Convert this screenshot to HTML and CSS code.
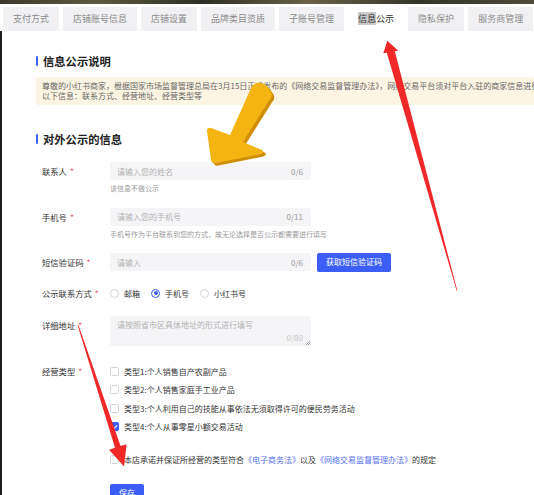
FILE: index.html
```html
<!DOCTYPE html>
<html lang="zh-CN">
<head>
<meta charset="utf-8">
<title>信息公示</title>
<link rel="stylesheet" href="styles.css">
</head>
<body>
<div class="photo-strip"></div>
<nav class="tabs">
  <span class="tab">支付方式</span>
  <span class="tab">店铺账号信息</span>
  <span class="tab">店铺设置</span>
  <span class="tab">品牌类目资质</span>
  <span class="tab">子账号管理</span>
  <span class="tab active"><span class="hl">信息</span>公示</span>
  <span class="tab">隐私保护</span>
  <span class="tab">服务商管理</span>
</nav>
<main class="page">
  <h2 class="section-title first">信息公示说明</h2>
  <div class="notice">
    <p>尊敬的小红书商家，根据国家市场监督管理总局在3月15日正式发布的《网络交易监督管理办法》，网络交易平台须对平台入驻的商家信息进行核验和公示</p>
    <p>以下信息：联系方式、经营地址、经营类型等</p>
  </div>
  <h2 class="section-title second">对外公示的信息</h2>
  <div class="form">
    <div class="field">
      <div class="label">联系人<i>*</i></div>
      <div class="control">
        <div class="input"><span class="ph">请输入您的姓名</span><span class="count">0/6</span></div>
        <div class="help">该信息不做公示</div>
      </div>
    </div>
    <div class="field gap-std">
      <div class="label">手机号<i>*</i></div>
      <div class="control">
        <div class="input"><span class="ph">请输入您的手机号</span><span class="count">0/11</span></div>
        <div class="help">手机号作为平台联系到您的方式，故无论选择是否公示都需要进行填写</div>
      </div>
    </div>
    <div class="field gap-std">
      <div class="label">短信验证码<i>*</i></div>
      <div class="control row">
        <div class="input"><span class="ph">请输入</span><span class="count">0/6</span></div>
        <button class="btn sms">获取短信验证码</button>
      </div>
    </div>
    <div class="field gap-radio">
      <div class="label">公示联系方式<i>*</i></div>
      <div class="control radio-group">
        <span class="radio"><span class="dot"></span>邮箱</span>
        <span class="radio on"><span class="dot"></span>手机号</span>
        <span class="radio"><span class="dot"></span>小红书号</span>
      </div>
    </div>
    <div class="field gap-area">
      <div class="label">详细地址<i>*</i></div>
      <div class="control">
        <div class="textarea"><span class="ph">请按照省市区具体地址的形式进行填写</span><span class="count light">0/80</span></div>
      </div>
    </div>
    <div class="field gap-checks">
      <div class="label tall">经营类型<i>*</i></div>
      <div class="control checks">
        <span class="check"><span class="box"></span>类型1:个人销售自产农副产品</span>
        <span class="check"><span class="box"></span>类型2:个人销售家庭手工业产品</span>
        <span class="check"><span class="box"></span>类型3:个人利用自己的技能从事依法无须取得许可的便民劳务活动</span>
        <span class="check on"><span class="box"></span>类型4:个人从事零星小额交易活动</span>
      </div>
    </div>
    <div class="agreement">
      <span class="check"><span class="box"></span>本店承诺并保证所经营的类型符合 <a class="link">《电子商务法》</a>以及<a class="link">《网络交易监督管理办法》</a>的规定</span>
    </div>
    <div class="actions">
      <button class="btn save">保存</button>
    </div>
  </div>
</main>
<svg class="annotations" width="534" height="495" viewBox="0 0 534 495" aria-hidden="true">
  <path class="yellow-side" d="M252 86 Q259 79 267 86 L271 92 Q273 96 270 99 L243 142 L262 150 Q265 152 261 154 L216 163 Q212 164 211 160 L207 131 Q207 127 211 128 L230 135 Z" transform="translate(2.5 2.5)"/>
  <path class="yellow" d="M252 86 Q259 79 267 86 L271 92 Q273 96 270 99 L243 142 L262 150 Q265 152 261 154 L216 163 Q212 164 211 160 L207 131 Q207 127 211 128 L230 135 Z"/>
  <polygon class="red" points="387.3,40.7 398.3,50.7 394.8,51.3 457.4,291 456.8,291 386.8,52.7 383.3,53.3"/>
  <polygon class="red" points="124.1,466.5 126.6,444.2 120.6,446.1 78.4,325 77.6,325.2 115.0,447.8 109.0,449.8"/>
</svg>
</body>
</html>
```
FILE: styles.css
```css
* {
  box-sizing: border-box;
  margin: 0;
  padding: 0;
}

html,
body {
  width: 534px;
  height: 495px;
  overflow: hidden;
}

body {
  position: relative;
  background: #fff;
  color: #333;
  font-family: "Noto Sans CJK SC", "Noto Sans", sans-serif;
}

.photo-strip {
  height: 4px;
  background: linear-gradient(90deg, #3b3a2c, #5b5a40 18%, #2e2f25 38%, #6a6248 58%, #34352a 78%, #4c4a38);
}

.tabs {
  display: flex;
  gap: 4px;
  height: 24px;
  margin-top: 3px;
  padding-left: 3px;
  white-space: nowrap;
}

.tab {
  flex: none;
  padding: 0 10px;
  background: #f1f1f3;
  color: #8c8c8c;
  font-size: 9px;
  line-height: 24px;
}

.tab.active {
  background: #fff;
  color: #333;
}

.tab .hl {
  background: #c9c9c9;
}

.page {
  height: 464px;
  border-left: 2px solid #1c1c1c;
  padding-left: 34px;
}

.section-title {
  display: flex;
  align-items: center;
  color: #222;
  font-size: 11.3px;
  font-weight: 700;
  line-height: 14px;
}

.section-title::before {
  content: "";
  width: 2px;
  height: 10px;
  margin-right: 5px;
  border-radius: 1px;
  background: #3c5ef7;
}

.section-title.first {
  padding-top: 23px;
}

.section-title.second {
  margin-top: 26.5px;
}

.notice {
  margin-top: 9px;
  padding: 4px 6px;
  overflow: hidden;
  border-radius: 2px;
  background: #fdf5e4;
  color: #666;
  font-size: 8px;
  line-height: 10px;
  white-space: nowrap;
}

.form {
  display: flex;
  flex-direction: column;
  margin-top: 16.5px;
  padding-left: 6px;
}

.field {
  display: flex;
}

.gap-std {
  margin-top: 14.5px;
}

.gap-radio {
  margin-top: 12.5px;
}

.gap-area {
  margin-top: 14px;
}

.gap-checks {
  margin-top: 15.7px;
}

.label {
  flex: none;
  width: 68px;
  color: #333;
  font-size: 8.3px;
  line-height: 18px;
}

.label.tall {
  line-height: 18.67px;
}

.label i {
  margin-left: 3px;
  color: #f2557a;
  font-style: normal;
}

.control.row {
  display: flex;
  align-items: center;
}

.input {
  display: flex;
  align-items: center;
  justify-content: space-between;
  width: 201px;
  height: 18px;
  padding: 0 8px 0 7px;
  border-radius: 2px;
  background: #f5f5f7;
  font-size: 8px;
}

.ph {
  color: #b3b3b3;
}

.count {
  color: #9a9a9a;
}

.count.light {
  align-self: flex-end;
  color: #c6c6c6;
}

.help {
  margin-top: 3px;
  color: #9a9a9a;
  font-size: 7px;
  line-height: 10px;
}

.btn {
  display: block;
  border: none;
  border-radius: 2px;
  background: #3c5ef7;
  color: #fff;
  font-family: inherit;
  font-size: 8px;
  line-height: 10px;
}

.btn.sms {
  width: 74px;
  height: 18.5px;
  margin-left: 6px;
}

.radio-group {
  display: flex;
  align-items: center;
  height: 18px;
}

.radio {
  display: flex;
  align-items: center;
  margin-right: 11px;
  color: #333;
  font-size: 8px;
}

.dot {
  display: flex;
  align-items: center;
  justify-content: center;
  width: 9px;
  height: 9px;
  margin-right: 5px;
  border: 1px solid #d4d4d8;
  border-radius: 50%;
  background: #fff;
}

.radio.on .dot {
  border-color: #3c5ef7;
}

.radio.on .dot::after {
  content: "";
  width: 4px;
  height: 4px;
  border-radius: 50%;
  background: #3c5ef7;
}

.textarea {
  position: relative;
  display: flex;
  flex-direction: column;
  justify-content: space-between;
  width: 201px;
  height: 30px;
  padding: 4px 8px 3px 7px;
  border-radius: 2px;
  background: #f5f5f7;
  font-size: 8px;
  line-height: 10px;
}

.textarea::after {
  content: "";
  position: absolute;
  right: 1px;
  bottom: 1px;
  width: 4px;
  height: 4px;
  background: linear-gradient(135deg, transparent 45%, #999 45%, #999 55%, transparent 55%, transparent 75%, #999 75%, #999 85%, transparent 85%);
}

.checks {
  display: flex;
  flex-direction: column;
}

.check {
  display: flex;
  align-items: center;
  height: 18.67px;
  color: #333;
  font-size: 8px;
  white-space: nowrap;
}

.box {
  position: relative;
  flex: none;
  width: 9px;
  height: 9px;
  margin-right: 5px;
  border: 1px solid #d4d4d8;
  border-radius: 1.5px;
  background: #fff;
}

.check.on .box {
  border-color: #3c5ef7;
  background: #3c5ef7;
}

.check.on .box::after {
  content: "";
  position: absolute;
  left: 2.3px;
  top: 0.4px;
  width: 2.4px;
  height: 4.6px;
  border-right: 1px solid #fff;
  border-bottom: 1px solid #fff;
  transform: rotate(45deg);
}

.agreement {
  display: flex;
  margin-top: 14.3px;
  margin-left: 68px;
}

.link {
  color: #5473f2;
}

.actions {
  display: flex;
  margin-top: 14.7px;
  margin-left: 68px;
}

.btn.save {
  width: 34px;
  height: 18px;
}

.annotations {
  position: absolute;
  top: 0;
  left: 0;
  pointer-events: none;
}

.yellow {
  fill: #f4b412;
}

.yellow-side {
  fill: #cf8e08;
}

.red {
  fill: #f0282a;
}
```
